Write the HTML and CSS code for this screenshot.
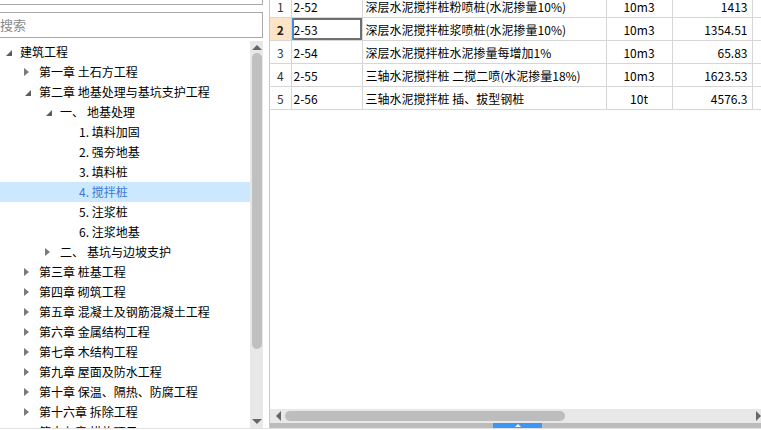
FILE: index.html
```html
<!DOCTYPE html>
<html lang="zh-CN">
<head>
<meta charset="utf-8">
<link rel="stylesheet" href="styles.css">
</head>
<body>
<div class="app">
  <div class="left">
    <div class="topbox"></div>
    <div class="search">搜索</div>
    <div class="treewrap">
      <ul class="tree">
        <li class="row lv0"><span class="tw open"></span><span>建筑工程</span></li>
        <li class="row lv1"><span class="tw closed"></span><span>第一章 土石方工程</span></li>
        <li class="row lv1"><span class="tw open"></span><span>第二章 地基处理与基坑支护工程</span></li>
        <li class="row lv2"><span class="tw open"></span><span class="num">一、</span><span>地基处理</span></li>
        <li class="row lv3"><span>1. 填料加固</span></li>
        <li class="row lv3"><span>2. 强夯地基</span></li>
        <li class="row lv3"><span>3. 填料桩</span></li>
        <li class="row lv3 sel"><span>4. 搅拌桩</span></li>
        <li class="row lv3"><span>5. 注浆桩</span></li>
        <li class="row lv3"><span>6. 注浆地基</span></li>
        <li class="row lv2"><span class="tw closed"></span><span class="num">二、</span><span>基坑与边坡支护</span></li>
        <li class="row lv1"><span class="tw closed"></span><span>第三章 桩基工程</span></li>
        <li class="row lv1"><span class="tw closed"></span><span>第四章 砌筑工程</span></li>
        <li class="row lv1"><span class="tw closed"></span><span>第五章 混凝土及钢筋混凝土工程</span></li>
        <li class="row lv1"><span class="tw closed"></span><span>第六章 金属结构工程</span></li>
        <li class="row lv1"><span class="tw closed"></span><span>第七章 木结构工程</span></li>
        <li class="row lv1"><span class="tw closed"></span><span>第九章 屋面及防水工程</span></li>
        <li class="row lv1"><span class="tw closed"></span><span>第十章 保温、隔热、防腐工程</span></li>
        <li class="row lv1"><span class="tw closed"></span><span>第十六章 拆除工程</span></li>
        <li class="row lv1"><span class="tw closed"></span><span>第十七章 措施项目</span></li>
      </ul>
      <div class="vscroll">
        <span class="arr-up"></span>
        <div class="vthumb"></div>
        <span class="arr-down"></span>
      </div>
    </div>
  </div>
  <div class="right">
    <div class="grid">
      <table class="tbl">
        <colgroup>
          <col class="c-no"><col class="c-code"><col class="c-name"><col class="c-unit"><col class="c-val"><col class="c-extra">
        </colgroup>
        <tr><td class="no">1</td><td class="code">2-52</td><td class="name">深层水泥搅拌桩粉喷桩(水泥掺量10%)</td><td class="unit">10m3</td><td class="val">1413</td><td></td></tr>
        <tr><td class="no cur">2</td><td class="code active">2-53</td><td class="name">深层水泥搅拌桩浆喷桩(水泥掺量10%)</td><td class="unit">10m3</td><td class="val">1354.51</td><td></td></tr>
        <tr><td class="no">3</td><td class="code">2-54</td><td class="name">深层水泥搅拌桩水泥掺量每增加1%</td><td class="unit">10m3</td><td class="val">65.83</td><td></td></tr>
        <tr><td class="no">4</td><td class="code">2-55</td><td class="name">三轴水泥搅拌桩 二搅二喷(水泥掺量18%)</td><td class="unit">10m3</td><td class="val">1623.53</td><td></td></tr>
        <tr><td class="no">5</td><td class="code">2-56</td><td class="name">三轴水泥搅拌桩 插、拔型钢桩</td><td class="unit">10t</td><td class="val">4576.3</td><td></td></tr>
      </table>
    </div>
    <div class="hscroll">
      <span class="arr-left"></span>
      <div class="hthumb"></div>
      <span class="arr-right"></span>
    </div>
    <div class="splitter"><span class="tab"><span class="tab-tri"></span></span></div>
  </div>
</div>
</body>
</html>
```
FILE: styles.css
```css
* { box-sizing: border-box; }
html, body { margin: 0; padding: 0; background: #fff; }
body {
  font-family: "Noto Sans CJK SC", "Noto Sans", sans-serif;
  font-size: 12px;
  color: #000;
  width: 761px;
  height: 430px;
  overflow: hidden;
}
.app {
  display: flex;
  height: 429px;
  border-bottom: 1px solid #e2e2e2;
}
.left {
  width: 263px;
  display: flex;
  flex-direction: column;
  flex: none;
}
.topbox {
  height: 5px;
  width: 263px;
  border-right: 1px solid #a9a9a9;
  border-bottom: 1px solid #a9a9a9;
}
.search {
  margin-top: 7px;
  height: 26px;
  width: 263px;
  border: 1px solid #a9a9a9;
  border-left: none;
  color: #8a8a8a;
  font-size: 13px;
  line-height: 23px;
}
.treewrap {
  flex: 1;
  display: flex;
  margin-top: 3px;
  min-height: 0;
}
.tree {
  list-style: none;
  margin: 0;
  padding: 1px 0 0 0;
  width: 250px;
  overflow: hidden;
}
.row {
  height: 20px;
  display: flex;
  align-items: center;
  white-space: nowrap;
  line-height: 20px;
}
.row.sel { background: #cce8ff; color: #3a7ad6; }
.lv0 { padding-left: 4px; }
.lv1 { padding-left: 23px; }
.lv2 { padding-left: 44px; }
.lv3 { padding-left: 79px; }
.tw {
  width: 16px;
  height: 20px;
  flex: none;
  position: relative;
}
.tw.open::before {
  content: "";
  position: absolute;
  left: 2px;
  top: 8px;
  width: 0;
  height: 0;
  border-bottom: 6px solid #5c5c5c;
  border-left: 6px solid transparent;
}
.tw.closed::before {
  content: "";
  position: absolute;
  left: 1px;
  top: 6px;
  width: 0;
  height: 0;
  border-left: 5px solid #7a7a7a;
  border-top: 4px solid transparent;
  border-bottom: 4px solid transparent;
}
.num { width: 27px; }
.vscroll {
  width: 13px;
  background: #e8e8e8;
  display: flex;
  flex-direction: column;
  align-items: center;
  flex: none;
}
.arr-up {
  margin-top: 4px;
  width: 0; height: 0;
  border-left: 5px solid transparent;
  border-right: 5px solid transparent;
  border-bottom: 5px solid #666;
}
.vthumb {
  margin-top: 3px;
  width: 10px;
  height: 296px;
  border-radius: 5px;
  background: #c0c0c0;
}
.arr-down {
  margin-top: auto;
  margin-bottom: 4px;
  width: 0; height: 0;
  border-left: 5px solid transparent;
  border-right: 5px solid transparent;
  border-top: 5px solid #666;
}
.right {
  flex: 1;
  margin-left: 6px;
  border-left: 1px solid #c8c8c8;
  display: flex;
  flex-direction: column;
  min-width: 0;
}
.grid {
  flex: 1;
  overflow: hidden;
}
.tbl {
  border-collapse: collapse;
  table-layout: fixed;
  width: 492px;
  margin-top: -6px;
}
.c-no { width: 21px; }
.c-code { width: 71px; }
.c-name { width: 244px; }
.c-unit { width: 66px; }
.c-val { width: 80px; }
.c-extra { width: 10px; }
.tbl td {
  height: 23px;
  border: 1px solid #d6d6d6;
  padding: 0 3px;
  white-space: nowrap;
  overflow: hidden;
  line-height: 21px;
}
.tbl tr td:first-child { border-left: none; }
.tbl td.no { text-align: center; color: #333; padding: 0; }
.tbl td.no.cur { background: #fde4c7; font-weight: bold; color: #222; }
.tbl td.code { padding-left: 2px; }
.tbl td.active { box-shadow: inset 2px 0 0 #3a8ee8, inset 0 0 0 2px #6f6f6f; }
.tbl td.unit { text-align: center; }
.tbl td.val { text-align: right; padding-right: 4px; }
.hscroll {
  height: 14px;
  background: #e8e8e8;
  display: flex;
  align-items: center;
  flex: none;
}
.arr-left {
  margin-left: 6px;
  width: 0; height: 0;
  border-top: 5px solid transparent;
  border-bottom: 5px solid transparent;
  border-right: 5px solid #666;
}
.hthumb {
  margin-left: 4px;
  width: 280px;
  height: 10px;
  border-radius: 5px;
  background: #bdbdbd;
}
.arr-right {
  margin-left: auto;
  width: 0; height: 0;
  border-top: 5px solid transparent;
  border-bottom: 5px solid transparent;
  border-left: 5px solid #666;
}
.splitter {
  height: 5px;
  background: #bcbcbc;
  display: flex;
  flex: none;
}
.tab {
  margin-left: 223px;
  width: 49px;
  height: 5px;
  background: #3d95f5;
  display: flex;
  justify-content: center;
  align-items: center;
}
.tab-tri {
  width: 0; height: 0;
  border-left: 3px solid transparent;
  border-right: 3px solid transparent;
  border-bottom: 3px solid #fff;
}
```
